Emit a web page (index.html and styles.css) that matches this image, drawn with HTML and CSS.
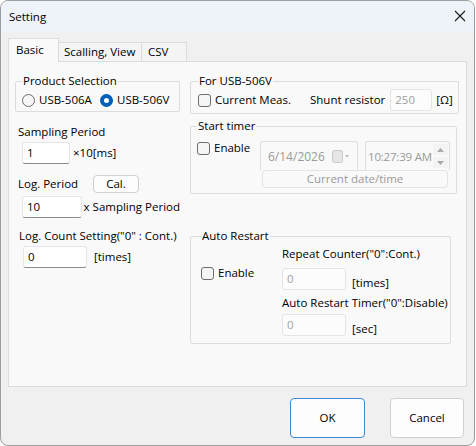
FILE: index.html
```html
<!DOCTYPE html>
<html lang="en">
<head>
<meta charset="UTF-8">
<title>Setting</title>
<link rel="stylesheet" href="styles.css">
</head>
<body>
<div class="window">
    <div class="titlebar">
        <span class="title">Setting</span>
        <svg class="close" width="12" height="12" viewBox="0 0 12 12">
            <path d="M1 1 L11 11 M11 1 L1 11" stroke="#1a1a1a" stroke-width="1.1" fill="none"/>
        </svg>
    </div>
    <div class="dialog-body">
        <div class="tabs">
            <div class="tab tab-basic active">Basic</div>
            <div class="tab tab-scale">Scalling, View</div>
            <div class="tab tab-csv">CSV</div>
        </div>
        <div class="panel">
            <div class="col-left">
                <fieldset class="group product">
                    <legend>Product Selection</legend>
                    <div class="radios">
                        <label class="radio first"><span class="rb"></span>USB-506A</label>
                        <label class="radio"><span class="rb on"></span>USB-506V</label>
                    </div>
                </fieldset>

                <div class="lbl lbl-sampling">Sampling Period</div>
                <div class="row row-sampling">
                    <div class="input w48">1</div>
                    <span class="unit">×10[ms]</span>
                </div>

                <div class="row row-logperiod">
                    <span class="lbl lbl-logperiod">Log. Period</span>
                    <button class="btn btn-cal">Cal.</button>
                </div>
                <div class="row row-logperiod-in">
                    <div class="input w64">10</div>
                    <span class="unit">x Sampling Period</span>
                </div>

                <div class="lbl lbl-count">Log. Count Setting("0" : Cont.)</div>
                <div class="row row-count">
                    <div class="input w64">0</div>
                    <span class="unit">[times]</span>
                </div>
            </div>

            <div class="col-right">
                <fieldset class="group usb">
                    <legend>For USB-506V</legend>
                    <div class="usb-row">
                        <label class="check w-current"><span class="cb"></span>Current Meas.</label>
                        <span class="shunt-lbl">Shunt resistor</span>
                        <div class="input disabled w42">250</div>
                        <span class="ohm">[Ω]</span>
                    </div>
                </fieldset>

                <fieldset class="group timer">
                    <legend>Start timer</legend>
                    <div class="timer-body">
                        <div class="timer-check">
                            <label class="check"><span class="cb"></span>Enable</label>
                        </div>
                        <div class="timer-right">
                            <div class="timer-pickers">
                                <div class="picker date">
                                    <span>6/14/2026</span>
                                    <span class="cal-icon">
                                        <svg width="18" height="13" viewBox="0 0 18 13">
                                            <rect x="0.5" y="0.5" width="10" height="12" rx="2" fill="#e6e6e6" stroke="#c8c8c8"/>
                                            <path d="M13 5 L17 5 L15 7.5 Z" fill="#b4b4b4"/>
                                        </svg>
                                    </span>
                                </div>
                                <div class="picker time">
                                    <span class="time-text">10:27:39 AM</span>
                                    <div class="spin">
                                        <div class="spin-btn">
                                            <svg width="7" height="4" viewBox="0 0 7 4"><path d="M0 4 L3.5 0 L7 4 Z" fill="#a8a8a8"/></svg>
                                        </div>
                                        <div class="spin-btn">
                                            <svg width="7" height="4" viewBox="0 0 7 4"><path d="M0 0 L3.5 4 L7 0 Z" fill="#a8a8a8"/></svg>
                                        </div>
                                    </div>
                                </div>
                            </div>
                            <button class="btn btn-now" disabled>Current date/time</button>
                        </div>
                    </div>
                </fieldset>

                <fieldset class="group restart">
                    <legend>Auto Restart</legend>
                    <div class="restart-body">
                        <div class="restart-check">
                            <label class="check"><span class="cb"></span>Enable</label>
                        </div>
                        <div class="restart-right">
                            <div class="lbl">Repeat Counter("0":Cont.)</div>
                            <div class="row row-repeat">
                                <div class="input disabled w64">0</div>
                                <span class="unit">[times]</span>
                            </div>
                            <div class="lbl lbl-timer">Auto Restart Timer("0":Disable)</div>
                            <div class="row row-restart-timer">
                                <div class="input disabled w64">0</div>
                                <span class="unit">[sec]</span>
                            </div>
                        </div>
                    </div>
                </fieldset>
            </div>
        </div>

        <div class="footer">
            <button class="btn btn-dlg btn-ok">OK</button>
            <button class="btn btn-dlg btn-cancel">Cancel</button>
        </div>
    </div>
</div>
</body>
</html>
```

FILE: styles.css
```css
body {
    margin: 0;
    background: #fff;
    font-family: "Open Sans", "Noto Sans", sans-serif;
    font-size: 11.5px;
    color: #000;
}

.window {
    width: 475px;
    height: 446px;
    box-sizing: border-box;
    border: 1px solid #9d9d9d;
    border-radius: 8px;
    background: #f0f0f0;
    overflow: hidden;
    display: flex;
    flex-direction: column;
    white-space: nowrap;
}

.titlebar {
    height: 31px;
    flex: none;
    background: #eef3f9;
    display: flex;
    align-items: center;
    justify-content: space-between;
    padding: 0 8px 0 8px;
}
.title {
    line-height: 16px;
}
.close {
    display: block;
    margin-top: -1px;
}

.dialog-body {
    padding: 6px 7px 0 7px;
}

/* tabs */
.tabs {
    display: flex;
    align-items: flex-end;
    height: 23px;
}
.tab {
    box-sizing: border-box;
    height: 19px;
    border: 1px solid #dcdcdc;
    border-bottom: none;
    background: #f4f4f4;
    padding-left: 5px;
    line-height: 17px;
    margin-left: -1px;
}
.tab.active {
    height: 24px;
    margin-bottom: -1px;
    margin-left: 0;
    background: #f9f9f9;
    padding-left: 7px;
    line-height: 22px;
    position: relative;
    z-index: 1;
}
.tab-basic { width: 51px; }
.tab-scale { width: 84px; }
.tab-csv { width: 46px; padding-left: 6px; }

.panel {
    box-sizing: border-box;
    height: 326px;
    border: 1px solid #dcdcdc;
    background: #f9f9f9;
    padding: 11px 0 0 6px;
    display: flex;
    gap: 10px;
}

/* group boxes */
.group {
    margin: 0;
    border: 1px solid #dcdcdc;
    border-radius: 2px;
    min-width: 0;
}
.group legend {
    padding: 0 1px;
    line-height: 16px;
    height: 16px;
}

.col-left {
    width: 165px;
    display: flex;
    flex-direction: column;
}
.col-right {
    width: 269px;
    display: flex;
    flex-direction: column;
}

.product {
    padding: 3px 6px 3px 6px;
}
.radios {
    display: flex;
    line-height: 16px;
}
.radio {
    display: flex;
    align-items: center;
    gap: 4px;
}
.radio.first {
    width: 78px;
}
.rb {
    width: 13px;
    height: 13px;
    box-sizing: border-box;
    border: 1px solid #6e6e6e;
    border-radius: 50%;
    background: #f5f5f5;
}
.rb.on {
    border: 4px solid #005fb8;
    background: #fff;
}

.lbl {
    line-height: 16px;
}
.row {
    display: flex;
    align-items: center;
}
.unit {
    line-height: 16px;
}

.lbl-sampling { margin: 12px 0 0 3px; }
.row-sampling { margin: 2px 0 0 7px; }
.row-sampling .unit { margin-left: 3px; }

.row-logperiod { margin: 11px 0 0 3px; }
.lbl-logperiod { width: 75px; }
.row-logperiod-in { margin: 3px 0 0 7px; }
.row-logperiod-in .unit { margin-left: 2px; }

.lbl-count { margin: 10px 0 0 4px; }
.row-count { margin: 2px 0 0 8px; }
.row-count .unit { margin-left: 7px; }

/* inputs */
.input {
    box-sizing: border-box;
    height: 22px;
    background: #fff;
    border: 1px solid #e5e5e5;
    border-bottom-color: #8a8a8a;
    border-radius: 3px;
    padding-left: 4px;
    line-height: 20px;
}
.input.disabled {
    color: #a0a0a0;
    border-bottom-color: #e5e5e5;
    background: #fcfcfc;
}
.w42 { width: 42px; }
.w48 { width: 48px; }
.w64 { width: 64px; }

/* buttons */
.btn {
    font: inherit;
    color: #000;
    background: #fdfdfd;
    border: 1px solid #d0d0d0;
    border-radius: 4px;
    padding: 0;
    box-sizing: border-box;
}
.btn-cal {
    width: 46px;
    height: 18px;
    line-height: 16px;
}

/* checkboxes */
.check {
    display: flex;
    align-items: center;
    gap: 4px;
    line-height: 16px;
}
.cb {
    width: 13px;
    height: 13px;
    box-sizing: border-box;
    border: 1px solid #6e6e6e;
    border-radius: 3px;
    background: #f5f5f5;
}

/* For USB-506V */
.usb {
    padding: 0 7px 2px 7px;
}
.usb-row {
    display: flex;
    align-items: center;
    height: 22px;
}
.w-current { width: 112px; flex: none; }
.shunt-lbl { line-height: 16px; }
.usb .input { margin-left: 5px; flex: none; }
.ohm { margin-left: 4px; line-height: 16px; }

/* Start timer */
.timer {
    margin-top: 4px;
    width: 267px;
    padding: 0 0 5px 6px;
    box-sizing: border-box;
}
.timer-body {
    display: flex;
}
.timer-check {
    width: 63px;
    padding-top: 6px;
}
.timer-right {
    width: 190px;
    padding-top: 7px;
}
.timer-pickers {
    display: flex;
    gap: 7px;
}
.picker {
    box-sizing: border-box;
    height: 29px;
    border: 1px solid #dedede;
    border-bottom: none;
    border-radius: 3px 3px 0 0;
    color: #9a9a9a;
    display: flex;
    align-items: center;
}
.picker.date {
    width: 98px;
    padding-left: 7px;
    font-size: 12px;
}
.cal-icon {
    margin-left: 7px;
    display: flex;
}
.picker.time {
    width: 85px;
    padding-left: 2px;
}
.time-text {
    letter-spacing: -0.2px;
}
.spin {
    margin-left: auto;
    display: flex;
    flex-direction: column;
    gap: 2px;
    align-self: stretch;
    padding: 2px 1px 0 0;
}
.spin-btn {
    width: 15px;
    height: 11px;
    background: #f3f3f3;
    display: flex;
    align-items: center;
    justify-content: center;
}
.btn-now {
    display: block;
    width: 186px;
    height: 18px;
    margin: 0 0 0 2px;
    line-height: 16px;
    color: #9a9a9a;
    background: #f9f9f9;
    border-color: #e3e3e3;
}

/* Auto Restart */
.restart {
    margin-top: 34px;
    width: 261px;
    padding: 2px 0 7px 10px;
    box-sizing: border-box;
}
.restart-body {
    display: flex;
}
.restart-check {
    width: 81px;
    padding-top: 19px;
}
.restart-right {
    display: flex;
    flex-direction: column;
}
.row-repeat,
.row-restart-timer {
    align-items: flex-end;
}
.row-repeat { margin-top: 6px; }
.row-restart-timer { margin-top: 3px; }
.restart-right .unit {
    margin-left: 6px;
    margin-bottom: -1px;
}
.lbl-timer { margin-top: 5px; }

/* footer buttons */
.footer {
    display: flex;
    justify-content: flex-end;
    gap: 25px;
    padding: 11px 3px 0 0;
}
.btn-dlg {
    height: 40px;
    line-height: 38px;
}
.btn-ok {
    width: 75px;
    border-color: #3d8ad6;
}
.btn-cancel {
    width: 74px;
}
```
